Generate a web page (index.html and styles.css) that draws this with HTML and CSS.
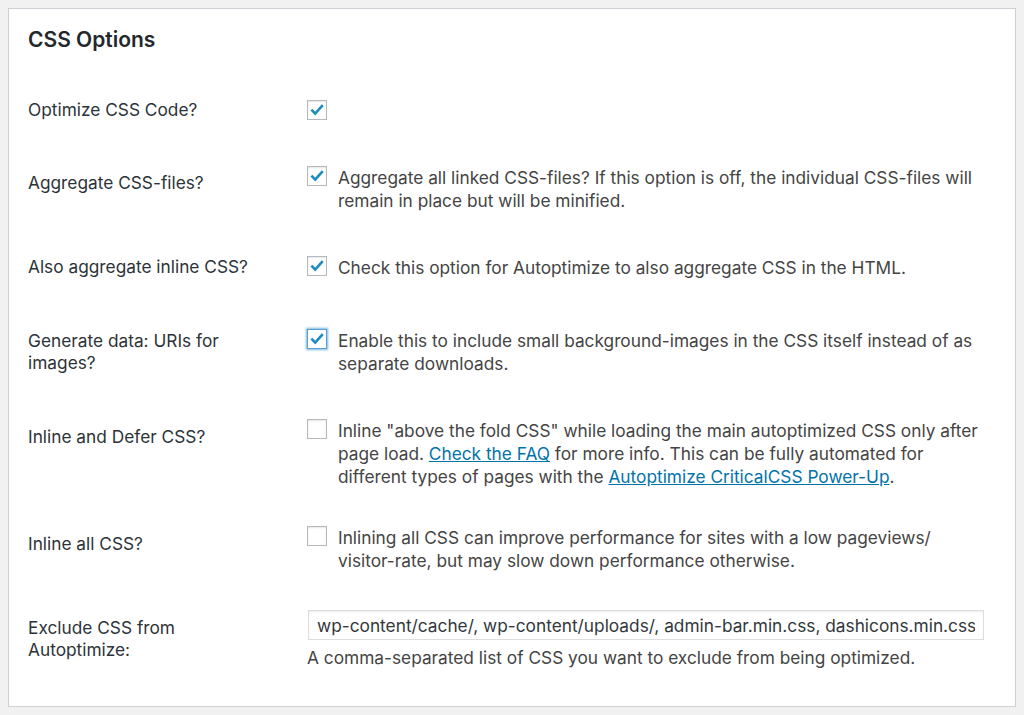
FILE: index.html
```html
<!DOCTYPE html>
<html lang="en">
<head>
<meta charset="utf-8">
<title>CSS Options</title>
<link rel="stylesheet" href="styles.css">
</head>
<body>
<div class="panel">
  <h2 class="panel-title">CSS Options</h2>
  <table class="form-table">
    <tr>
      <th>Optimize CSS Code?</th>
      <td><label class="opt"><span class="cb checked"><svg viewBox="0 0 20 20"><path d="M3.8 9.6 L8 14 L16.4 4.6"/></svg></span></label></td>
    </tr>
    <tr>
      <th>Aggregate CSS-files?</th>
      <td><label class="opt"><span class="cb checked"><svg viewBox="0 0 20 20"><path d="M3.8 9.6 L8 14 L16.4 4.6"/></svg></span><span class="opt-text">Aggregate all linked CSS-files? If this option is off, the individual CSS-files will remain in place but will be minified.</span></label></td>
    </tr>
    <tr>
      <th>Also aggregate inline CSS?</th>
      <td><label class="opt"><span class="cb checked"><svg viewBox="0 0 20 20"><path d="M3.8 9.6 L8 14 L16.4 4.6"/></svg></span><span class="opt-text">Check this option for Autoptimize to also aggregate CSS in the HTML.</span></label></td>
    </tr>
    <tr>
      <th>Generate data: URIs for images?</th>
      <td><label class="opt"><span class="cb checked focused"><svg viewBox="0 0 20 20"><path d="M3.8 9.6 L8 14 L16.4 4.6"/></svg></span><span class="opt-text">Enable this to include small background-images in the CSS itself instead of as separate downloads.</span></label></td>
    </tr>
    <tr>
      <th>Inline and Defer CSS?</th>
      <td><label class="opt"><span class="cb"></span><span class="opt-text">Inline "above the fold CSS" while loading the main autoptimized CSS only after page load. <a href="#">Check the FAQ</a> for more info. This can be fully automated for different types of pages with the <a href="#">Autoptimize CriticalCSS Power-Up</a>.</span></label></td>
    </tr>
    <tr>
      <th>Inline all CSS?</th>
      <td><label class="opt"><span class="cb"></span><span class="opt-text">Inlining all CSS can improve performance for sites with a low pageviews/<wbr>visitor-rate, but may slow down performance otherwise.</span></label></td>
    </tr>
    <tr>
      <th>Exclude CSS from Autoptimize:</th>
      <td>
        <input class="text-input" type="text" value="wp-content/cache/, wp-content/uploads/, admin-bar.min.css, dashicons.min.css">
        <p class="description">A comma-separated list of CSS you want to exclude from being optimized.</p>
      </td>
    </tr>
  </table>
</div>
</body>
</html>
```
FILE: styles.css
```css
html, body {
  margin: 0;
  padding: 0;
  background: #f1f1f1;
}
body {
  font-family: Inter, "Noto Sans", sans-serif;
  font-size: 17.3px;
  color: #444;
}
.panel {
  margin: 8px;
  background: #fff;
  border: 1px solid #ccd0d4;
  padding: 17px 19px 18px 19px;
}
.panel-title {
  margin: 0 0 20px 0;
  font-size: 21px;
  line-height: 27px;
  font-weight: 600;
  color: #23282d;
}
.form-table {
  border-collapse: collapse;
  width: 100%;
}
.form-table th {
  width: 230px;
  padding: 25.5px 49px 25.5px 0;
  text-align: left;
  vertical-align: top;
  font-weight: 400;
  line-height: 22.5px;
  color: #2c3338;
}
.form-table td {
  padding: 19px 12px 19px 0;
  vertical-align: middle;
  line-height: 23px;
}
.opt {
  display: flex;
  align-items: flex-start;
}
.cb {
  flex: none;
  box-sizing: border-box;
  width: 20px;
  height: 20px;
  margin-right: 11px;
  border: 1px solid #b4b9be;
  background: #fff;
  box-shadow: inset 0 1px 2px rgba(0, 0, 0, 0.1);
  display: flex;
  align-items: center;
  justify-content: center;
}
.cb svg {
  width: 18px;
  height: 18px;
  display: block;
}
.cb path {
  fill: none;
  stroke: #1e8cbe;
  stroke-width: 3;
}
.cb.focused {
  border-color: #5b9dd9;
  box-shadow: 0 0 2px 1px rgba(30, 140, 190, 0.6);
}
.opt-text a {
  color: #0073aa;
  text-decoration: underline;
}
.text-input {
  display: block;
  box-sizing: border-box;
  width: calc(100% - 1px);
  height: 30px;
  margin: 0 0 0 1px;
  padding: 0 8px;
  border: 1px solid #ddd;
  box-shadow: inset 0 1px 2px rgba(0, 0, 0, 0.07);
  font-family: Inter, "Noto Sans", sans-serif;
  font-size: 17.3px;
  color: #32373c;
  background: #fff;
}
.description {
  margin: 6px 0 0 0;
  font-size: 17.3px;
  line-height: 23px;
  color: #444;
}
```
